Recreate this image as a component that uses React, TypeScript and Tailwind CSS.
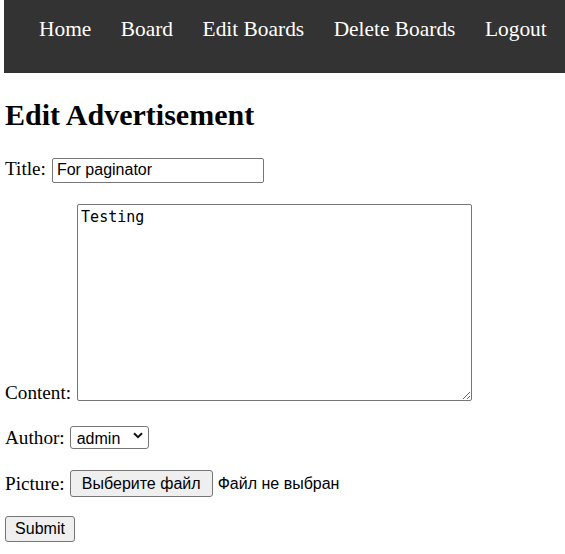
const serif = "font-['Liberation_Serif','Times_New_Roman',serif]";
const sans = "font-['Liberation_Sans',Arial,sans-serif]";

const links = ['Home', 'Board', 'Edit Boards', 'Delete Boards', 'Logout'];

// simple page: nav + edit form, browser-default look
const App = () => {
  return (
    <div className={`min-h-[554px] bg-white text-black ${serif}`}>
      <nav className="ml-[4px] flex h-[73px] gap-[29.5px] bg-[#333333] pl-[35px] pt-[17px]">
        {links.map((l) => (
          <a key={l} href="#" className="text-[21.4px] leading-[24px] text-white">
            {l}
          </a>
        ))}
      </nav>
      <div className="pl-[5px]">
        <h1 className="mt-[25px] text-[30px] font-bold leading-[34px]">Edit Advertisement</h1>
        <form className="flex flex-col" onSubmit={(e) => e.preventDefault()}>
          <div className="mt-[23px] flex items-baseline gap-[6px] text-[19.2px]">
            <label htmlFor="title">Title:</label>
            <input
              id="title"
              defaultValue="For paginator"
              className={`h-[25px] w-[212px] rounded-[2px] border border-[#767676] px-[4px] text-[16px] ${sans}`}
            />
          </div>
          <div className="mt-[20px] flex items-end gap-[6px] text-[19.2px]">
            <label htmlFor="content" className="mb-[-7px]">
              Content:
            </label>
            <textarea
              id="content"
              defaultValue="Testing"
              className="h-[197px] w-[395px] rounded-[2px] border border-[#767676] px-[3px] pt-[3px] font-['DejaVu_Sans_Mono',monospace] text-[15px] leading-[19px]"
            />
          </div>
          <div className="mt-[23px] flex items-center gap-[5px] text-[19.2px]">
            <label htmlFor="author">Author:</label>
            <div className="relative">
              <select
                id="author"
                defaultValue="admin"
                className={`h-[23px] w-[79px] appearance-none rounded-[3px] border border-[#767676] bg-white pl-[6px] text-[16px] ${sans}`}
              >
                <option value="admin">admin</option>
              </select>
              <svg
                className="pointer-events-none absolute right-[6px] top-[8px]"
                width="10"
                height="7"
                viewBox="0 0 10 7"
              >
                <path d="M1 1.2 5 5.2 9 1.2" fill="none" stroke="#111" strokeWidth="2" />
              </svg>
            </div>
          </div>
          <div className="mt-[17px] flex items-center gap-[5px] text-[19.2px]">
            <span>Picture:</span>
            <button
              type="button"
              className={`h-[27px] w-[143px] rounded-[3px] border border-[#767676] bg-[#efefef] text-[16px] ${sans}`}
            >
              Выберите файл
            </button>
            <span className={`text-[16px] ${sans}`}>Файл не выбран</span>
          </div>
          <div className="mt-[18px]">
            <button
              type="submit"
              className={`h-[26px] w-[70px] rounded-[3px] border border-[#767676] bg-[#efefef] text-[16px] ${sans}`}
            >
              Submit
            </button>
          </div>
        </form>
      </div>
    </div>
  );
};

export default App;
